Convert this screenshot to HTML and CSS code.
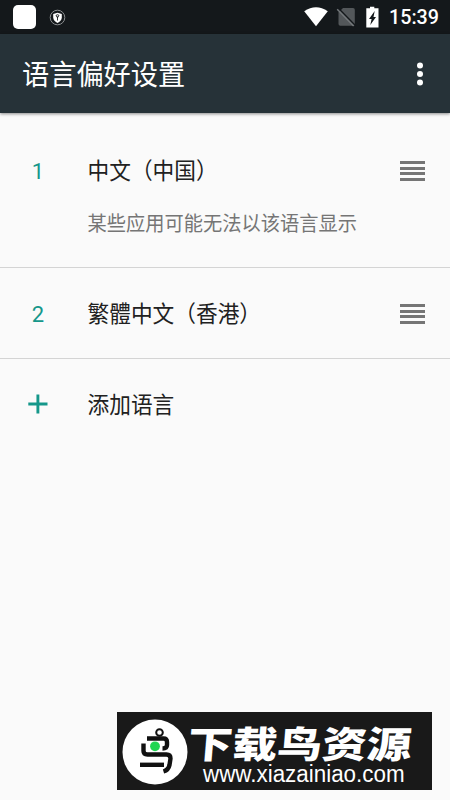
FILE: index.html
```
<!DOCTYPE html>
<html lang="zh-CN">
<head>
<meta charset="utf-8">
<title>语言偏好设置</title>
<link rel="stylesheet" href="styles.css">
</head>
<body>
<div class="screen">
  <div class="status">
    <span class="app-square"></span>
    <svg class="shield" width="17" height="17" viewBox="0 0 17 17">
      <circle cx="8.5" cy="8.5" r="7.3" fill="none" stroke="#8d9092" stroke-width="1"/>
      <path d="M8.5 3.8 12.8 5v3.5c0 2.6-2 4.3-4.3 5.4-2.300-1.100-4.300-2.800-4.300-5.400V5z" fill="#fff"/>
      <path d="M8.500 11.500V7.500M7 6.400q1.500-1.400 3 0L8.500 8.800z" fill="none" stroke="#14181b" stroke-width=".9"/>
    </svg>
    <svg class="system" width="80" height="34" viewBox="0 0 80 34">
      <path d="M.2 11.200Q12 3.200 23.800 11.200L12 26.300z" fill="#fff"/>
      <path d="M39 8h10q1.800 0 1.800 1.800V25.700H36.300q-1.800 0-1.800-1.800V12.500z" fill="#53575a"/>
      <path d="M34.400 8.300 51.800 26" stroke="#14181b" stroke-width="1.500"/>
      <path d="M33.200 9.300 49.600 26" stroke="#73777a" stroke-width="1.500"/>
      <path d="M66 6.700h4.300V8.300h4.200v19.200H62.300V8.300H66z" fill="#fff"/>
      <path d="M70.700 11 65 19h2.600l-1.300 6L72 17h-2.500z" fill="#14181b"/>
    </svg>
    <span class="time">15:39</span>
  </div>
  <header class="appbar">
    <h1>语言偏好设置</h1>
    <svg width="8" height="26" viewBox="0 0 8 26" fill="#fff"><circle cx="4" cy="4.500" r="3"/><circle cx="4" cy="13" r="3"/><circle cx="4" cy="21.500" r="3"/></svg>
  </header>
  <main>
    <section class="row first">
      <span class="num">1</span>
      <div class="label"><p class="name">中文（中国）</p><p class="note">某些应用可能无法以该语言显示</p></div>
      <span class="handle"><i></i><i></i><i></i><i></i></span>
    </section>
    <section class="row">
      <span class="num">2</span>
      <div class="label"><p class="name">繁體中文（香港）</p></div>
      <span class="handle"><i></i><i></i><i></i><i></i></span>
    </section>
    <section class="row add">
      <svg class="num" width="76" height="22" viewBox="0 0 76 22"><path d="M28.300 11h19.200M37.900 1.400v19.200" stroke="#15978a" stroke-width="2.900"/></svg>
      <div class="label"><p class="name">添加语言</p></div>
    </section>
  </main>
  <aside class="mark">
    <svg class="logo" width="66" height="66" viewBox="0 0 66 66">
      <circle cx="33" cy="33" r="32.500" fill="#fff"/>
      <g fill="none" stroke="#111" stroke-width="4.400" stroke-linejoin="round">
        <circle cx="37.500" cy="13.500" r="3.300" stroke-width="2"/>
        <path d="M25 19.500h16.500q3.500 0 3.500 3.500v3q0 3.500-4.500 3.500"/>
        <path d="M21.500 24.500V32q0 3.500 4 3.500h19q4 0 4 4l-1 6.500q-1 5-6 6.500"/>
        <path d="M18 45.800h24"/>
      </g>
      <circle cx="33" cy="27.300" r="4.900" fill="#20d552"/>
    </svg>
    <div class="words"><span class="brand">下载鸟资源</span><span class="url">www.xiazainiao.com</span></div>
  </aside>
</div>
</body>
</html>
```
FILE: styles.css
```
* { box-sizing: border-box; }
body { margin: 0; }
p, h1 { margin: 0; font-weight: 400; }
.screen {
  position: relative;
  width: 450px;
  height: 800px;
  overflow: hidden;
  background: #fafafa;
  font-family: Roboto, "Noto Sans CJK SC", sans-serif;
}
.status {
  height: 34px;
  display: flex;
  align-items: center;
  padding: 0 11px 0 13px;
  background: #14181b;
  color: #fff;
}
.app-square { width: 23px; height: 24px; border-radius: 5px; background: #fff; }
.shield { margin-left: 13px; }
.system { margin-left: auto; }
.time {
  width: 50px;
  margin-left: 5px;
  padding-top: 2px;
  font-size: 19.700px;
  font-weight: 500;
  line-height: 24px;
  white-space: nowrap;
}
.appbar {
  position: relative;
  height: 79px;
  display: flex;
  align-items: center;
  justify-content: space-between;
  padding: 0 26px 0 22px;
  background: #263238;
  color: #fff;
  box-shadow: 0 1px 3px rgba(0, 0, 0, .45);
}
.appbar h1 { padding-top: 2px; font-size: 27.200px; line-height: 36px; transform: scaleY(1.060); }
.row {
  height: 91px;
  display: flex;
  align-items: flex-start;
  padding: 31px 25px 0 0;
  border-bottom: 1px solid #d4d4d4;
}
.row.first { height: 155px; padding-top: 43px; }
.row.add { border: 0; }
.num {
  flex: none;
  width: 76px;
  text-align: center;
  color: #15978a;
  font-size: 22px;
  line-height: 32px;
}
svg.num { margin-top: 3px; }
.label { flex: 1; padding: 1px 0 0 11.500px; }
.name { color: #212121; font-size: 21.700px; line-height: 30px; white-space: nowrap; transform: scaleY(1.060); }
.note { margin-top: 24px; color: #757575; font-size: 19.250px; line-height: 28px; white-space: nowrap; transform: scaleY(1.050); }
.handle { display: grid; gap: 2.700px; width: 25px; padding-top: 5px; }
.handle i { height: 3px; background: #757575; }
.mark {
  position: absolute;
  left: 117px;
  top: 712px;
  width: 315px;
  height: 78px;
  display: flex;
  align-items: center;
  padding-left: 5px;
  background: #191919;
  color: #fff;
}
.logo { flex: none; margin-top: 2px; }
.words { display: flex; flex-direction: column; padding-top: 8px; }
.brand {
  font-family: "Noto Sans CJK SC", sans-serif;
  font-size: 37px;
  font-weight: 900;
  line-height: 40px;
  white-space: nowrap;
  transform: scaleX(1.210) skewX(-4deg);
  transform-origin: 0 50%;
}
.url {
  margin-left: 15px;
  font-family: "Liberation Sans", sans-serif;
  font-size: 22.400px;
  line-height: 26px;
  transform: scaleY(1.060);
}
```
